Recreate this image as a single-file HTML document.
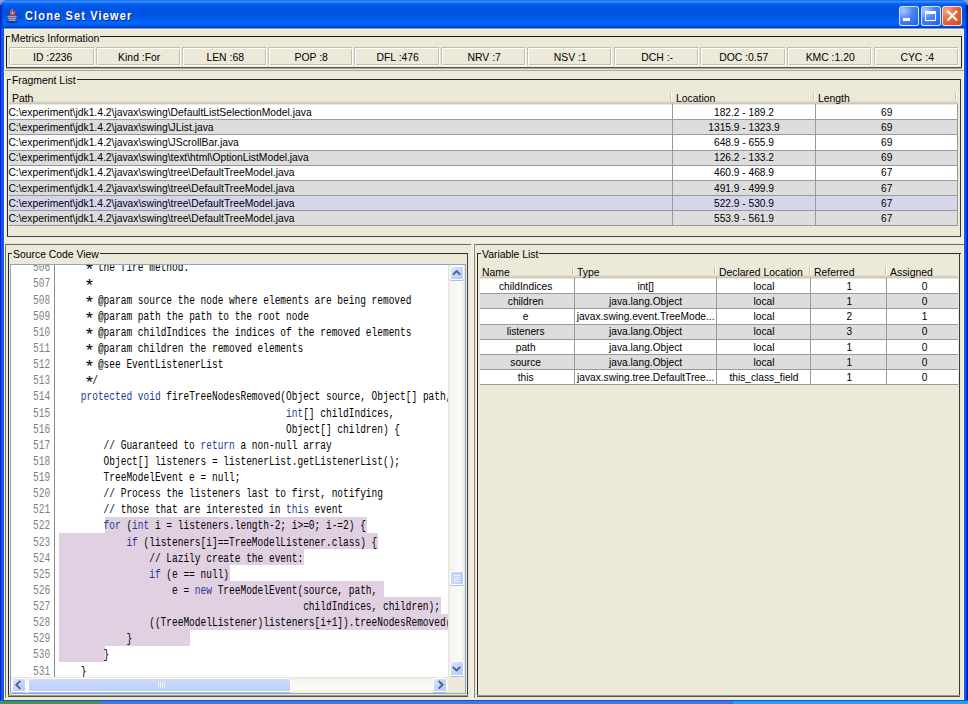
<!DOCTYPE html>
<html><head><meta charset="utf-8"><style>
html,body{margin:0;padding:0;}
body{width:968px;height:704px;overflow:hidden;position:relative;background:#ECE9D8;font-family:"Liberation Sans",sans-serif;}
div{position:absolute;box-sizing:border-box;}
.t{font-size:10.4px;line-height:12px;height:12px;white-space:pre;color:#000;}
.tc{font-size:10.4px;line-height:12px;height:12px;white-space:pre;color:#000;text-align:center;}
.code{font-family:"Liberation Mono",monospace;font-size:12px;line-height:16px;white-space:pre;color:#000;transform-origin:0 0;}
.kw{color:#1E3A92;}
</style></head><body>

<div style="left:0;top:0;width:968px;height:29px;border-radius:7px 7px 0 0;background:linear-gradient(to bottom,#0847D8 0px,#3D95FF 1px,#2C88FF 2px,#0D6CF8 3px,#025BEA 5px,#0054E3 8px,#0054E3 16px,#005CEE 19px,#0066FF 22px,#0063F8 25px,#0050E0 26.5px,#003CC8 27.5px,#6C86C8 28px,#9AA8C8 29px);"></div>
<div style="left:0;top:5px;width:4px;height:24px;background:linear-gradient(to right,#0024BC 0,#0038D0 1.5px,rgba(0,60,220,0) 3.5px);"></div>
<div style="left:964px;top:5px;width:4px;height:24px;background:linear-gradient(to left,#00138C 0,#0028C0 1.5px,rgba(0,60,220,0) 3.5px);"></div>
<svg style="position:absolute;left:4px;top:5px" width="20" height="20" viewBox="0 0 20 20">
<path d="M6.2 10 C5.3 7.8 6.8 6 8.4 2.6 C9 5 8.6 6.8 9.6 7.2 C10.2 6.4 10.4 5.6 10.6 4.8 C11.6 6.6 11.2 8.8 10.2 10 Z" fill="#D8603A"/>
<path d="M7.6 9.6 C7.4 8.2 8.2 7 8.6 5.6 C9 7.2 9.2 8.4 9.6 9.6 Z" fill="#F4A070"/>
<path d="M3 10 L13 10 L11.2 16 L5.2 16 Z" fill="#8C88C8"/>
<path d="M3 10.3 L13 10.3 M3.6 12.2 L12.4 12.2 M4.3 14.1 L11.8 14.1 M5 16 L11.2 16" stroke="#282860" stroke-width="1.2"/>
<path d="M3.6 11.2 L12.4 11.2 M4.2 13.15 L11.9 13.15 M4.8 15.05 L11.4 15.05" stroke="#F0ECFF" stroke-width="0.75"/>
<path d="M13.6 9.6 L16.8 11.4 L14 14.6" stroke="#3A3A78" stroke-width="1.1" fill="none"/>
<path d="M2.6 16.6 Q8 18.6 13.4 16.6" stroke="#30306A" stroke-width="1.2" fill="none"/>
</svg>
<div style="left:25px;top:8.8px;font-family:'Liberation Sans',sans-serif;font-weight:bold;font-size:12.5px;line-height:14px;letter-spacing:1.3px;color:#fff;text-shadow:1px 1px 0 #0A1C7A;white-space:pre;transform:scaleX(0.88);transform-origin:0 0;">Clone Set Viewer</div>
<div style="left:0;top:0;width:968px;height:8px;background:#8A9CDC;z-index:-1"></div>
<div style="left:899px;top:6px;width:20px;height:20px;border-radius:3px;border:1px solid rgba(255,255,255,0.8);background:radial-gradient(circle at 20% 20%,#A8C4FF 0%,#4A84F8 45%,#1F5CEA 100%);"><div style="left:3.3px;top:11.1px;width:7px;height:3px;background:#fff"></div></div>
<div style="left:920.7px;top:6px;width:20px;height:20px;border-radius:3px;border:1px solid rgba(255,255,255,0.8);background:radial-gradient(circle at 20% 20%,#A8C4FF 0%,#4A84F8 45%,#1F5CEA 100%);"><div style="left:3px;top:3.5px;width:11px;height:10.5px;border:1.3px solid #fff;border-top-width:3px"></div></div>
<div style="left:942.3px;top:6px;width:20px;height:20px;border-radius:3px;border:1px solid rgba(255,255,255,0.8);background:radial-gradient(circle at 20% 20%,#F4A888 0%,#E46A40 45%,#D24A18 100%);"><svg style="position:absolute;left:-1px;top:-1px" width="20" height="20" viewBox="0 0 20 20"><path d="M5.5 5 L15 14.5 M15 5 L5.5 14.5" stroke="#fff" stroke-width="2.1"/></svg></div>
<div style="left:0px;top:28px;width:4px;height:673px;background:linear-gradient(to right,#0019CF 0,#0019CF 1px,#0A5AF0 1px,#0A5AF0 4px)"></div>
<div style="left:964px;top:28px;width:4px;height:673px;background:linear-gradient(to right,#0A5AF0 0,#0A5AF0 2px,#0019CF 3px,#00138C 4px)"></div>
<div style="left:0px;top:700px;width:968px;height:1px;background:#1650E0"></div>
<div style="left:0px;top:701px;width:968px;height:3px;background:#3A7BE0"></div>
<div style="left:0px;top:701px;width:101px;height:3px;background:#3F9A48;border-radius:0 6px 0 0"></div>
<div style="left:733px;top:701px;width:235px;height:3px;background:#14A6EE"></div>
<div style="left:4px;top:29px;width:960px;height:1px;background:#F8F4E4"></div>
<div style="left:963px;top:29px;width:1px;height:671px;background:#FBF6E6"></div>
<div style="left:6px;top:36px;width:956px;height:1px;background:#1A1A1A"></div>
<div style="left:6px;top:36px;width:1px;height:32px;background:#1A1A1A"></div>
<div style="left:961px;top:36px;width:1px;height:32px;background:#2A2A2A"></div>
<div style="left:6px;top:67px;width:956px;height:1px;background:#55554D"></div>
<div style="left:6px;top:68px;width:956px;height:1px;background:#A9A698"></div>
<div class="t" style="left:10px;top:33px;background:#ECE9D8;padding:0 1px;">Metrics Information</div>
<div style="left:9px;top:47px;width:86px;height:19px;border-top:1px solid #C2BEAE;border-left:1px solid #C2BEAE;border-right:1px solid #FFFFFF;border-bottom:1px solid #FFFFFF;box-shadow:inset 1px 1px 0 #FFFFFF,inset -1px -1px 0 #C2BEAE;"></div>
<div class="tc" style="left:10.2px;top:52px;width:85px;">ID :2236</div>
<div style="left:96px;top:47px;width:85px;height:19px;border-top:1px solid #C2BEAE;border-left:1px solid #C2BEAE;border-right:1px solid #FFFFFF;border-bottom:1px solid #FFFFFF;box-shadow:inset 1px 1px 0 #FFFFFF,inset -1px -1px 0 #C2BEAE;"></div>
<div class="tc" style="left:97.2px;top:52px;width:84px;">Kind :For</div>
<div style="left:182px;top:47px;width:85px;height:19px;border-top:1px solid #C2BEAE;border-left:1px solid #C2BEAE;border-right:1px solid #FFFFFF;border-bottom:1px solid #FFFFFF;box-shadow:inset 1px 1px 0 #FFFFFF,inset -1px -1px 0 #C2BEAE;"></div>
<div class="tc" style="left:183.2px;top:52px;width:84px;">LEN :68</div>
<div style="left:268px;top:47px;width:85px;height:19px;border-top:1px solid #C2BEAE;border-left:1px solid #C2BEAE;border-right:1px solid #FFFFFF;border-bottom:1px solid #FFFFFF;box-shadow:inset 1px 1px 0 #FFFFFF,inset -1px -1px 0 #C2BEAE;"></div>
<div class="tc" style="left:269.2px;top:52px;width:84px;">POP :8</div>
<div style="left:354px;top:47px;width:86px;height:19px;border-top:1px solid #C2BEAE;border-left:1px solid #C2BEAE;border-right:1px solid #FFFFFF;border-bottom:1px solid #FFFFFF;box-shadow:inset 1px 1px 0 #FFFFFF,inset -1px -1px 0 #C2BEAE;"></div>
<div class="tc" style="left:355.2px;top:52px;width:85px;">DFL :476</div>
<div style="left:441px;top:47px;width:85px;height:19px;border-top:1px solid #C2BEAE;border-left:1px solid #C2BEAE;border-right:1px solid #FFFFFF;border-bottom:1px solid #FFFFFF;box-shadow:inset 1px 1px 0 #FFFFFF,inset -1px -1px 0 #C2BEAE;"></div>
<div class="tc" style="left:442.2px;top:52px;width:84px;">NRV :7</div>
<div style="left:527px;top:47px;width:85px;height:19px;border-top:1px solid #C2BEAE;border-left:1px solid #C2BEAE;border-right:1px solid #FFFFFF;border-bottom:1px solid #FFFFFF;box-shadow:inset 1px 1px 0 #FFFFFF,inset -1px -1px 0 #C2BEAE;"></div>
<div class="tc" style="left:528.2px;top:52px;width:84px;">NSV :1</div>
<div style="left:614px;top:47px;width:85px;height:19px;border-top:1px solid #C2BEAE;border-left:1px solid #C2BEAE;border-right:1px solid #FFFFFF;border-bottom:1px solid #FFFFFF;box-shadow:inset 1px 1px 0 #FFFFFF,inset -1px -1px 0 #C2BEAE;"></div>
<div class="tc" style="left:615.2px;top:52px;width:84px;">DCH :-</div>
<div style="left:700px;top:47px;width:86px;height:19px;border-top:1px solid #C2BEAE;border-left:1px solid #C2BEAE;border-right:1px solid #FFFFFF;border-bottom:1px solid #FFFFFF;box-shadow:inset 1px 1px 0 #FFFFFF,inset -1px -1px 0 #C2BEAE;"></div>
<div class="tc" style="left:701.2px;top:52px;width:85px;">DOC :0.57</div>
<div style="left:787px;top:47px;width:85px;height:19px;border-top:1px solid #C2BEAE;border-left:1px solid #C2BEAE;border-right:1px solid #FFFFFF;border-bottom:1px solid #FFFFFF;box-shadow:inset 1px 1px 0 #FFFFFF,inset -1px -1px 0 #C2BEAE;"></div>
<div class="tc" style="left:788.2px;top:52px;width:84px;">KMC :1.20</div>
<div style="left:874px;top:47px;width:85px;height:19px;border-top:1px solid #C2BEAE;border-left:1px solid #C2BEAE;border-right:1px solid #FFFFFF;border-bottom:1px solid #FFFFFF;box-shadow:inset 1px 1px 0 #FFFFFF,inset -1px -1px 0 #C2BEAE;"></div>
<div class="tc" style="left:875.2px;top:52px;width:84px;">CYC :4</div>
<div style="left:5px;top:70px;width:959px;height:1px;background:#ACA897"></div>
<div style="left:4px;top:70px;width:1px;height:630px;background:#FBF6E6"></div>
<div style="left:7px;top:79px;width:954px;height:1px;background:#2A2A2A"></div>
<div style="left:7px;top:79px;width:1px;height:158px;background:#2A2A2A"></div>
<div style="left:960px;top:79px;width:1px;height:158px;background:#3A3A3A"></div>
<div style="left:7px;top:236px;width:954px;height:1px;background:#4A4A45"></div>
<div class="t" style="left:11px;top:75px;background:#ECE9D8;padding:0 1px;">Fragment List</div>
<div style="left:9px;top:101px;width:949px;height:1px;background:#E2DECD"></div>
<div style="left:9px;top:102px;width:949px;height:1px;background:#D6D2C2"></div>
<div style="left:9px;top:103px;width:949px;height:1px;background:#CBC7B8"></div>
<div style="left:669.5px;top:93px;width:1px;height:7px;background:#C7C3B0"></div>
<div style="left:670.5px;top:93px;width:1px;height:7px;background:#FFFFFF"></div>
<div style="left:812.5px;top:93px;width:1px;height:7px;background:#C7C3B0"></div>
<div style="left:813.5px;top:93px;width:1px;height:7px;background:#FFFFFF"></div>
<div style="left:954.9px;top:93px;width:1px;height:7px;background:#C7C3B0"></div>
<div style="left:955.9px;top:93px;width:1px;height:7px;background:#FFFFFF"></div>
<div class="t" style="left:12px;top:93px;">Path</div>
<div class="t" style="left:676px;top:93px;">Location</div>
<div class="t" style="left:818px;top:93px;">Length</div>
<div style="left:9px;top:104.5px;width:949px;height:15.125px;background:#FFFFFF"></div>
<div style="left:9px;top:119.62px;width:949px;height:15.125px;background:#DDDDDD"></div>
<div style="left:9px;top:134.75px;width:949px;height:15.125px;background:#FFFFFF"></div>
<div style="left:9px;top:149.88px;width:949px;height:15.125px;background:#DDDDDD"></div>
<div style="left:9px;top:165.0px;width:949px;height:15.125px;background:#FFFFFF"></div>
<div style="left:9px;top:180.12px;width:949px;height:15.125px;background:#DDDDDD"></div>
<div style="left:9px;top:195.25px;width:949px;height:15.125px;background:#D5D5EC"></div>
<div style="left:9px;top:210.38px;width:949px;height:15.125px;background:#DDDDDD"></div>
<div style="left:9px;top:119.25px;width:949px;height:1px;background:#9A9A9A"></div>
<div class="t" style="left:8.4px;top:106.9px;font-size:10.32px;">C:\experiment\jdk1.4.2\javax\swing\DefaultListSelectionModel.java</div>
<div class="tc" style="left:672.5px;top:106.9px;width:143.0px;font-size:10.2px;">182.2 - 189.2</div>
<div class="tc" style="left:815.5px;top:106.9px;width:142.5px;font-size:10.2px;">69</div>
<div style="left:9px;top:134.38px;width:949px;height:1px;background:#9A9A9A"></div>
<div class="t" style="left:8.4px;top:122.03px;font-size:10.32px;">C:\experiment\jdk1.4.2\javax\swing\JList.java</div>
<div class="tc" style="left:672.5px;top:122.03px;width:143.0px;font-size:10.2px;">1315.9 - 1323.9</div>
<div class="tc" style="left:815.5px;top:122.03px;width:142.5px;font-size:10.2px;">69</div>
<div style="left:9px;top:149.5px;width:949px;height:1px;background:#9A9A9A"></div>
<div class="t" style="left:8.4px;top:137.15px;font-size:10.32px;">C:\experiment\jdk1.4.2\javax\swing\JScrollBar.java</div>
<div class="tc" style="left:672.5px;top:137.15px;width:143.0px;font-size:10.2px;">648.9 - 655.9</div>
<div class="tc" style="left:815.5px;top:137.15px;width:142.5px;font-size:10.2px;">69</div>
<div style="left:9px;top:164.62px;width:949px;height:1px;background:#9A9A9A"></div>
<div class="t" style="left:8.4px;top:152.28px;font-size:10.32px;">C:\experiment\jdk1.4.2\javax\swing\text\html\OptionListModel.java</div>
<div class="tc" style="left:672.5px;top:152.28px;width:143.0px;font-size:10.2px;">126.2 - 133.2</div>
<div class="tc" style="left:815.5px;top:152.28px;width:142.5px;font-size:10.2px;">69</div>
<div style="left:9px;top:179.75px;width:949px;height:1px;background:#9A9A9A"></div>
<div class="t" style="left:8.4px;top:167.4px;font-size:10.32px;">C:\experiment\jdk1.4.2\javax\swing\tree\DefaultTreeModel.java</div>
<div class="tc" style="left:672.5px;top:167.4px;width:143.0px;font-size:10.2px;">460.9 - 468.9</div>
<div class="tc" style="left:815.5px;top:167.4px;width:142.5px;font-size:10.2px;">67</div>
<div style="left:9px;top:194.88px;width:949px;height:1px;background:#9A9A9A"></div>
<div class="t" style="left:8.4px;top:182.53px;font-size:10.32px;">C:\experiment\jdk1.4.2\javax\swing\tree\DefaultTreeModel.java</div>
<div class="tc" style="left:672.5px;top:182.53px;width:143.0px;font-size:10.2px;">491.9 - 499.9</div>
<div class="tc" style="left:815.5px;top:182.53px;width:142.5px;font-size:10.2px;">67</div>
<div style="left:9px;top:210.0px;width:949px;height:1px;background:#9A9A9A"></div>
<div class="t" style="left:8.4px;top:197.65px;font-size:10.32px;">C:\experiment\jdk1.4.2\javax\swing\tree\DefaultTreeModel.java</div>
<div class="tc" style="left:672.5px;top:197.65px;width:143.0px;font-size:10.2px;">522.9 - 530.9</div>
<div class="tc" style="left:815.5px;top:197.65px;width:142.5px;font-size:10.2px;">67</div>
<div style="left:9px;top:225.12px;width:949px;height:1px;background:#9A9A9A"></div>
<div class="t" style="left:8.4px;top:212.78px;font-size:10.32px;">C:\experiment\jdk1.4.2\javax\swing\tree\DefaultTreeModel.java</div>
<div class="tc" style="left:672.5px;top:212.78px;width:143.0px;font-size:10.2px;">553.9 - 561.9</div>
<div class="tc" style="left:815.5px;top:212.78px;width:142.5px;font-size:10.2px;">67</div>
<div style="left:671.5px;top:104px;width:1px;height:122px;background:#9A9A9A"></div>
<div style="left:814.5px;top:104px;width:1px;height:122px;background:#9A9A9A"></div>
<div style="left:957px;top:104px;width:1px;height:122px;background:#9A9A9A"></div>
<div style="left:5px;top:243.6px;width:466px;height:1px;background:#6E6B60"></div>
<div style="left:474px;top:243.6px;width:490px;height:1px;background:#6E6B60"></div>
<div style="left:5px;top:238px;width:959px;height:5px;background:#F1EEE2"></div>
<div style="left:471px;top:244px;width:3px;height:455px;background:#F1EEE2"></div>
<div style="left:5px;top:244px;width:1px;height:454px;background:#7A776C"></div>
<div style="left:474px;top:244px;width:1px;height:454px;background:#8A877C"></div>
<div style="left:8px;top:253px;width:460px;height:1px;background:#2A2A2A"></div>
<div style="left:8px;top:253px;width:1px;height:443px;background:#2A2A2A"></div>
<div style="left:467px;top:253px;width:1px;height:443px;background:#3A3A3A"></div>
<div style="left:8px;top:695px;width:460px;height:1px;background:#9A978A"></div>
<div style="left:8px;top:696px;width:460px;height:1px;background:#55544C"></div>
<div class="t" style="left:12px;top:249px;background:#ECE9D8;padding:0 1px;">Source Code View</div>
<div style="left:10px;top:264px;width:456px;height:430px;border:1px solid #8CA6C8;background:#ECE9D8"></div>
<div style="left:11px;top:265px;width:437px;height:412px;background:#FFFFFF;overflow:hidden"><div style="left:93.60px;top:251.78px;width:262.20px;height:16.13px;background:#E0D0E2"></div><div style="left:48.00px;top:267.91px;width:319.20px;height:16.13px;background:#E0D0E2"></div><div style="left:48.00px;top:284.04px;width:245.10px;height:16.13px;background:#E0D0E2"></div><div style="left:48.00px;top:300.17px;width:171.00px;height:16.13px;background:#E0D0E2"></div><div style="left:48.00px;top:316.30px;width:324.90px;height:16.13px;background:#E0D0E2"></div><div style="left:48.00px;top:332.43px;width:381.90px;height:16.13px;background:#E0D0E2"></div><div style="left:48.00px;top:348.56px;width:456.00px;height:16.13px;background:#E0D0E2"></div><div style="left:48.00px;top:364.69px;width:131.10px;height:16.13px;background:#E0D0E2"></div><div style="left:48.00px;top:380.82px;width:45.60px;height:16.13px;background:#E0D0E2"></div><div style="left:43px;top:0;width:1px;height:412px;background:#8A8A8A"></div><div class="code" style="left:46.90px;top:-4.65px;transform:scaleX(0.79167)">     <span style="display:inline-block;transform:translateY(3px) scale(1.9,1.35)">*</span> the fire method.</div><div class="code" style="left:22.00px;top:-4.65px;transform:scaleX(0.79167);color:#808080">506</div><div class="code" style="left:46.90px;top:11.48px;transform:scaleX(0.79167)">     <span style="display:inline-block;transform:translateY(3px) scale(1.9,1.35)">*</span></div><div class="code" style="left:22.00px;top:11.48px;transform:scaleX(0.79167);color:#808080">507</div><div class="code" style="left:46.90px;top:27.61px;transform:scaleX(0.79167)">     <span style="display:inline-block;transform:translateY(3px) scale(1.9,1.35)">*</span> @param source the node where elements are being removed</div><div class="code" style="left:22.00px;top:27.61px;transform:scaleX(0.79167);color:#808080">508</div><div class="code" style="left:46.90px;top:43.74px;transform:scaleX(0.79167)">     <span style="display:inline-block;transform:translateY(3px) scale(1.9,1.35)">*</span> @param path the path to the root node</div><div class="code" style="left:22.00px;top:43.74px;transform:scaleX(0.79167);color:#808080">509</div><div class="code" style="left:46.90px;top:59.87px;transform:scaleX(0.79167)">     <span style="display:inline-block;transform:translateY(3px) scale(1.9,1.35)">*</span> @param childIndices the indices of the removed elements</div><div class="code" style="left:22.00px;top:59.87px;transform:scaleX(0.79167);color:#808080">510</div><div class="code" style="left:46.90px;top:76.00px;transform:scaleX(0.79167)">     <span style="display:inline-block;transform:translateY(3px) scale(1.9,1.35)">*</span> @param children the removed elements</div><div class="code" style="left:22.00px;top:76.00px;transform:scaleX(0.79167);color:#808080">511</div><div class="code" style="left:46.90px;top:92.13px;transform:scaleX(0.79167)">     <span style="display:inline-block;transform:translateY(3px) scale(1.9,1.35)">*</span> @see EventListenerList</div><div class="code" style="left:22.00px;top:92.13px;transform:scaleX(0.79167);color:#808080">512</div><div class="code" style="left:46.90px;top:108.26px;transform:scaleX(0.79167)">     <span style="display:inline-block;transform:translateY(3px) scale(1.9,1.35)">*</span>/</div><div class="code" style="left:22.00px;top:108.26px;transform:scaleX(0.79167);color:#808080">513</div><div class="code" style="left:46.90px;top:124.39px;transform:scaleX(0.79167)">    <span class="kw">protected</span> <span class="kw">void</span> fireTreeNodesRemoved(Object source, Object[] path,</div><div class="code" style="left:22.00px;top:124.39px;transform:scaleX(0.79167);color:#808080">514</div><div class="code" style="left:46.90px;top:140.52px;transform:scaleX(0.79167)">                                        <span class="kw">int</span>[] childIndices,</div><div class="code" style="left:22.00px;top:140.52px;transform:scaleX(0.79167);color:#808080">515</div><div class="code" style="left:46.90px;top:156.65px;transform:scaleX(0.79167)">                                        Object[] children) {</div><div class="code" style="left:22.00px;top:156.65px;transform:scaleX(0.79167);color:#808080">516</div><div class="code" style="left:46.90px;top:172.78px;transform:scaleX(0.79167)">        // Guaranteed to <span class="kw">return</span> a non-null array</div><div class="code" style="left:22.00px;top:172.78px;transform:scaleX(0.79167);color:#808080">517</div><div class="code" style="left:46.90px;top:188.91px;transform:scaleX(0.79167)">        Object[] listeners = listenerList.getListenerList();</div><div class="code" style="left:22.00px;top:188.91px;transform:scaleX(0.79167);color:#808080">518</div><div class="code" style="left:46.90px;top:205.04px;transform:scaleX(0.79167)">        TreeModelEvent e = null;</div><div class="code" style="left:22.00px;top:205.04px;transform:scaleX(0.79167);color:#808080">519</div><div class="code" style="left:46.90px;top:221.17px;transform:scaleX(0.79167)">        // Process the listeners last to first, notifying</div><div class="code" style="left:22.00px;top:221.17px;transform:scaleX(0.79167);color:#808080">520</div><div class="code" style="left:46.90px;top:237.30px;transform:scaleX(0.79167)">        // those that are interested in <span class="kw">this</span> event</div><div class="code" style="left:22.00px;top:237.30px;transform:scaleX(0.79167);color:#808080">521</div><div class="code" style="left:46.90px;top:253.43px;transform:scaleX(0.79167)">        <span class="kw">for</span> (<span class="kw">int</span> i = listeners.length-2; i&gt;=0; i-=2) {</div><div class="code" style="left:22.00px;top:253.43px;transform:scaleX(0.79167);color:#808080">522</div><div class="code" style="left:46.90px;top:269.56px;transform:scaleX(0.79167)">            <span class="kw">if</span> (listeners[i]==TreeModelListener.class) {</div><div class="code" style="left:22.00px;top:269.56px;transform:scaleX(0.79167);color:#808080">523</div><div class="code" style="left:46.90px;top:285.69px;transform:scaleX(0.79167)">                // Lazily create the event:</div><div class="code" style="left:22.00px;top:285.69px;transform:scaleX(0.79167);color:#808080">524</div><div class="code" style="left:46.90px;top:301.82px;transform:scaleX(0.79167)">                <span class="kw">if</span> (e == null)</div><div class="code" style="left:22.00px;top:301.82px;transform:scaleX(0.79167);color:#808080">525</div><div class="code" style="left:46.90px;top:317.95px;transform:scaleX(0.79167)">                    e = <span class="kw">new</span> TreeModelEvent(source, path, </div><div class="code" style="left:22.00px;top:317.95px;transform:scaleX(0.79167);color:#808080">526</div><div class="code" style="left:46.90px;top:334.08px;transform:scaleX(0.79167)">                                           childIndices, children);</div><div class="code" style="left:22.00px;top:334.08px;transform:scaleX(0.79167);color:#808080">527</div><div class="code" style="left:46.90px;top:350.21px;transform:scaleX(0.79167)">                ((TreeModelListener)listeners[i+1]).treeNodesRemoved(</div><div class="code" style="left:22.00px;top:350.21px;transform:scaleX(0.79167);color:#808080">528</div><div class="code" style="left:46.90px;top:366.34px;transform:scaleX(0.79167)">            }</div><div class="code" style="left:22.00px;top:366.34px;transform:scaleX(0.79167);color:#808080">529</div><div class="code" style="left:46.90px;top:382.47px;transform:scaleX(0.79167)">        }</div><div class="code" style="left:22.00px;top:382.47px;transform:scaleX(0.79167);color:#808080">530</div><div class="code" style="left:46.90px;top:398.60px;transform:scaleX(0.79167)">    }</div><div class="code" style="left:22.00px;top:398.60px;transform:scaleX(0.79167);color:#808080">531</div></div>
<div style="left:448px;top:265px;width:16px;height:412px;background:linear-gradient(to right,#E6E3D8 0,#F5F4EE 3px,#FBFBF8 12px,#F0EEE6 16px)"></div>
<div style="left:449.5px;top:266px;width:14px;height:14px;border-radius:2px;border:1px solid #FFFFFF;background:linear-gradient(135deg,#DCE6FE 0%,#C4D4FC 50%,#B6CAF8 100%);box-shadow:0 1px 0 #A8BCE8"><svg style="position:absolute;left:0;top:0" width="13" height="13" viewBox="0 0 13 13"><path d="M2.1 7.7 L5.6 4.2 L9.1 7.7" stroke="#4D6185" stroke-width="1.9" fill="none"/></svg></div>
<div style="left:449.5px;top:661px;width:14px;height:15px;border-radius:2px;border:1px solid #FFFFFF;background:linear-gradient(135deg,#DCE6FE 0%,#C4D4FC 50%,#B6CAF8 100%);box-shadow:0 1px 0 #A8BCE8"><svg style="position:absolute;left:0;top:0" width="13" height="14" viewBox="0 0 13 14"><path d="M1.8 4.8 L5.5 8.5 L9.2 4.8" stroke="#4D6185" stroke-width="1.9" fill="none"/></svg></div>
<div style="left:449.5px;top:571px;width:14px;height:14px;border-radius:2px;border:1px solid #FFFFFF;background:linear-gradient(to right,#C8D6FC,#BCCEFA);box-shadow:0 1px 0 #A8BCE8"><div style="left:3px;top:3px;width:6px;height:1px;background:#EEF2FE;box-shadow:0 2px 0 #EEF2FE,0 4px 0 #EEF2FE,0 6px 0 #EEF2FE"></div></div>
<div style="left:11px;top:676.5px;width:437px;height:16px;background:linear-gradient(to bottom,#E6E3D8 0,#F5F4EE 3px,#FBFBF8 12px,#F0EEE6 16px)"></div>
<div style="left:12px;top:678px;width:14px;height:14px;border-radius:2px;border:1px solid #FFFFFF;background:linear-gradient(135deg,#DCE6FE 0%,#C4D4FC 50%,#B6CAF8 100%);box-shadow:0 1px 0 #A8BCE8"><svg style="position:absolute;left:0;top:0" width="14" height="14" viewBox="0 0 14 14"><path d="M7.3 1.8 L3.3 5.8 L7.3 9.8" stroke="#4D6185" stroke-width="1.9" fill="none"/></svg></div>
<div style="left:433px;top:678px;width:14px;height:14px;border-radius:2px;border:1px solid #FFFFFF;background:linear-gradient(135deg,#DCE6FE 0%,#C4D4FC 50%,#B6CAF8 100%);box-shadow:0 1px 0 #A8BCE8"><svg style="position:absolute;left:0;top:0" width="14" height="14" viewBox="0 0 14 14"><path d="M4.7 2 L8.5 5.8 L4.7 9.6" stroke="#4D6185" stroke-width="1.9" fill="none"/></svg></div>
<div style="left:28px;top:678px;width:263px;height:14px;border-radius:2px;border:1px solid #FFFFFF;background:linear-gradient(to bottom,#CCDAFC,#BCCEFA);box-shadow:0 1px 0 #A8BCE8"><div style="left:129px;top:3px;width:1px;height:6px;background:#EEF2FE;box-shadow:2px 0 0 #EEF2FE,4px 0 0 #EEF2FE,6px 0 0 #EEF2FE"></div></div>
<div style="left:477px;top:253px;width:484px;height:1px;background:#2A2A2A"></div>
<div style="left:477px;top:253px;width:1px;height:443px;background:#2A2A2A"></div>
<div style="left:959.4px;top:253px;width:1px;height:443px;background:#3A3A3A"></div>
<div style="left:477px;top:695px;width:483px;height:1px;background:#9A978A"></div>
<div style="left:477px;top:696px;width:483px;height:1px;background:#55544C"></div>
<div class="t" style="left:481px;top:249px;background:#ECE9D8;padding:0 1px;">Variable List</div>
<div style="left:480px;top:275px;width:478px;height:1px;background:#E2DECD"></div>
<div style="left:480px;top:276px;width:478px;height:1px;background:#D6D2C2"></div>
<div style="left:480px;top:277px;width:478px;height:1px;background:#CBC7B8"></div>
<div style="left:572px;top:267px;width:1px;height:7px;background:#C7C3B0"></div>
<div style="left:573px;top:267px;width:1px;height:7px;background:#FFFFFF"></div>
<div style="left:714px;top:267px;width:1px;height:7px;background:#C7C3B0"></div>
<div style="left:715px;top:267px;width:1px;height:7px;background:#FFFFFF"></div>
<div style="left:808.5px;top:267px;width:1px;height:7px;background:#C7C3B0"></div>
<div style="left:809.5px;top:267px;width:1px;height:7px;background:#FFFFFF"></div>
<div style="left:884.5px;top:267px;width:1px;height:7px;background:#C7C3B0"></div>
<div style="left:885.5px;top:267px;width:1px;height:7px;background:#FFFFFF"></div>
<div class="t" style="left:482px;top:267px;">Name</div>
<div class="t" style="left:577px;top:267px;">Type</div>
<div class="t" style="left:719px;top:267px;">Declared Location</div>
<div class="t" style="left:814px;top:267px;">Referred</div>
<div class="t" style="left:890px;top:267px;">Assigned</div>
<div style="left:480px;top:278.6px;width:478px;height:15.125px;background:#FFFFFF"></div>
<div style="left:480px;top:293.73px;width:478px;height:15.125px;background:#DDDDDD"></div>
<div style="left:480px;top:308.85px;width:478px;height:15.125px;background:#FFFFFF"></div>
<div style="left:480px;top:323.98px;width:478px;height:15.125px;background:#DDDDDD"></div>
<div style="left:480px;top:339.1px;width:478px;height:15.125px;background:#FFFFFF"></div>
<div style="left:480px;top:354.23px;width:478px;height:15.125px;background:#DDDDDD"></div>
<div style="left:480px;top:369.35px;width:478px;height:15.125px;background:#FFFFFF"></div>
<div style="left:480px;top:293.35px;width:478px;height:1px;background:#9A9A9A"></div>
<div class="tc" style="left:478.4px;top:281.0px;width:94.5px;font-size:10.2px;">childIndices</div>
<div class="tc" style="left:574.5px;top:281.0px;width:142.20000000000005px;font-size:10.2px;">int[]</div>
<div class="tc" style="left:716.7px;top:281.0px;width:94.59999999999991px;font-size:10.2px;">local</div>
<div class="tc" style="left:811.3px;top:281.0px;width:75.90000000000009px;font-size:10.2px;">1</div>
<div class="tc" style="left:887.2px;top:281.0px;width:74.79999999999995px;font-size:10.2px;">0</div>
<div style="left:480px;top:308.48px;width:478px;height:1px;background:#9A9A9A"></div>
<div class="tc" style="left:478.4px;top:296.12px;width:94.5px;font-size:10.2px;">children</div>
<div class="tc" style="left:574.5px;top:296.12px;width:142.20000000000005px;font-size:10.2px;">java.lang.Object</div>
<div class="tc" style="left:716.7px;top:296.12px;width:94.59999999999991px;font-size:10.2px;">local</div>
<div class="tc" style="left:811.3px;top:296.12px;width:75.90000000000009px;font-size:10.2px;">1</div>
<div class="tc" style="left:887.2px;top:296.12px;width:74.79999999999995px;font-size:10.2px;">0</div>
<div style="left:480px;top:323.6px;width:478px;height:1px;background:#9A9A9A"></div>
<div class="tc" style="left:478.4px;top:311.25px;width:94.5px;font-size:10.2px;">e</div>
<div class="tc" style="left:574.5px;top:311.25px;width:142.20000000000005px;font-size:10.2px;">javax.swing.event.TreeMode...</div>
<div class="tc" style="left:716.7px;top:311.25px;width:94.59999999999991px;font-size:10.2px;">local</div>
<div class="tc" style="left:811.3px;top:311.25px;width:75.90000000000009px;font-size:10.2px;">2</div>
<div class="tc" style="left:887.2px;top:311.25px;width:74.79999999999995px;font-size:10.2px;">1</div>
<div style="left:480px;top:338.73px;width:478px;height:1px;background:#9A9A9A"></div>
<div class="tc" style="left:478.4px;top:326.38px;width:94.5px;font-size:10.2px;">listeners</div>
<div class="tc" style="left:574.5px;top:326.38px;width:142.20000000000005px;font-size:10.2px;">java.lang.Object</div>
<div class="tc" style="left:716.7px;top:326.38px;width:94.59999999999991px;font-size:10.2px;">local</div>
<div class="tc" style="left:811.3px;top:326.38px;width:75.90000000000009px;font-size:10.2px;">3</div>
<div class="tc" style="left:887.2px;top:326.38px;width:74.79999999999995px;font-size:10.2px;">0</div>
<div style="left:480px;top:353.85px;width:478px;height:1px;background:#9A9A9A"></div>
<div class="tc" style="left:478.4px;top:341.5px;width:94.5px;font-size:10.2px;">path</div>
<div class="tc" style="left:574.5px;top:341.5px;width:142.20000000000005px;font-size:10.2px;">java.lang.Object</div>
<div class="tc" style="left:716.7px;top:341.5px;width:94.59999999999991px;font-size:10.2px;">local</div>
<div class="tc" style="left:811.3px;top:341.5px;width:75.90000000000009px;font-size:10.2px;">1</div>
<div class="tc" style="left:887.2px;top:341.5px;width:74.79999999999995px;font-size:10.2px;">0</div>
<div style="left:480px;top:368.98px;width:478px;height:1px;background:#9A9A9A"></div>
<div class="tc" style="left:478.4px;top:356.62px;width:94.5px;font-size:10.2px;">source</div>
<div class="tc" style="left:574.5px;top:356.62px;width:142.20000000000005px;font-size:10.2px;">java.lang.Object</div>
<div class="tc" style="left:716.7px;top:356.62px;width:94.59999999999991px;font-size:10.2px;">local</div>
<div class="tc" style="left:811.3px;top:356.62px;width:75.90000000000009px;font-size:10.2px;">1</div>
<div class="tc" style="left:887.2px;top:356.62px;width:74.79999999999995px;font-size:10.2px;">0</div>
<div style="left:480px;top:384.1px;width:478px;height:1px;background:#9A9A9A"></div>
<div class="tc" style="left:478.4px;top:371.75px;width:94.5px;font-size:10.2px;">this</div>
<div class="tc" style="left:574.5px;top:371.75px;width:142.20000000000005px;font-size:10.2px;">javax.swing.tree.DefaultTree...</div>
<div class="tc" style="left:716.7px;top:371.75px;width:94.59999999999991px;font-size:10.2px;">this_class_field</div>
<div class="tc" style="left:811.3px;top:371.75px;width:75.90000000000009px;font-size:10.2px;">1</div>
<div class="tc" style="left:887.2px;top:371.75px;width:74.79999999999995px;font-size:10.2px;">0</div>
<div style="left:573.5px;top:278px;width:1px;height:106.48000000000002px;background:#9A9A9A"></div>
<div style="left:715.7px;top:278px;width:1px;height:106.48000000000002px;background:#9A9A9A"></div>
<div style="left:810.3px;top:278px;width:1px;height:106.48000000000002px;background:#9A9A9A"></div>
<div style="left:886.2px;top:278px;width:1px;height:106.48000000000002px;background:#9A9A9A"></div>
</body></html>
